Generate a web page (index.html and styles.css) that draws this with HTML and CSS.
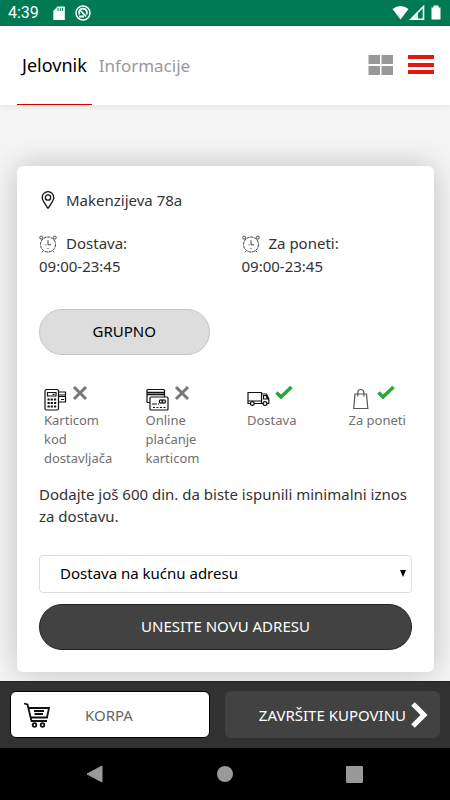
FILE: index.html
```html
<!DOCTYPE html>
<html lang="sr-Latn">
<head>
<meta charset="utf-8">
<meta name="viewport" content="width=device-width, initial-scale=1">
<title>Jelovnik</title>
<link rel="stylesheet" href="styles.css">
</head>
<body>
<svg class="defs" width="0" height="0" aria-hidden="true">
  <symbol id="clock" viewBox="0 0 18 18">
    <g fill="none" stroke="#444">
      <circle cx="9" cy="9.500" r="7.500" stroke-width="1" stroke-dasharray="3.200 .600"/>
      <circle cx="2.200" cy="2.600" r="1.500"/><circle cx="15.800" cy="2.600" r="1.500"/>
      <path d="M9 5.200V9.800H12M4 16l-1 1.300M14 16l1 1.300M6.500 9.800h1M9 13v1"/>
    </g>
  </symbol>
  <symbol id="cross" viewBox="0 0 16 16"><path d="M2 2l12 12M14 2L2 14" stroke="#777" stroke-width="3" fill="none"/></symbol>
  <symbol id="check" viewBox="0 0 18 16"><path d="M1.500 7.500l4.500 4.500L16.500 2" stroke="#2aa63a" stroke-width="3.600" fill="none"/></symbol>
</svg>

<div class="status">
  <span class="time">4:39</span>
  <svg width="12" height="15" viewBox="0 0 12 15"><path d="M4.500 .5H11q.8 0 .8 .8V14H.3V5z" fill="#fff"/><path d="M5 2v3M7.300 2v3M9.500 2v3" stroke="#007a53"/></svg>
  <svg width="16" height="16" viewBox="0 0 16 16" fill="none" stroke="#fff"><circle cx="8" cy="8" r="7" stroke-width="1.500"/><path d="M4.500 9.500A4 4 0 1 1 11.500 9.500M5.500 5.500l5.500 6M4 11.500h5" stroke-width="1.800"/></svg>
  <svg class="signals" width="50" height="16" viewBox="0 0 50 16"><path d="M.5 4Q8.500-2 16.500 4L8.500 14.500z" fill="#fff"/><path d="M31.500 1.500V14.200H19z" fill="none" stroke="#fff" stroke-width="1.600"/><path d="M31.500 1.500L19 14.200H26V7z" fill="#fff" opacity=".85"/><path d="M39.500 2.500h2V.5h5v2h2V14.500h-9z" fill="#fff"/></svg>
</div>

<header class="header">
  <nav class="tabs">
    <a class="tab active" href="#jelovnik" aria-current="page">Jelovnik</a>
    <a class="tab" href="#informacije">Informacije</a>
  </nav>
  <div class="views">
    <button class="view" type="button" aria-label="Mreža"><svg width="26" height="22" viewBox="0 0 26 22"><path d="M.5 1h11.500v9H.5zM13.500 1H25v9H13.500zM.5 12h11.500v9H.5zM13.500 12H25v9H13.500z" fill="#999"/></svg></button>
    <button class="view" type="button" aria-label="Lista"><svg width="26" height="22" viewBox="0 0 26 22"><path d="M0 1h26v4H0zM0 9h26v4H0zM0 16h26v4H0z" fill="#e2180f"/></svg></button>
  </div>
</header>

<main class="main">
  <section class="card">
    <p class="line address">
      <svg width="18" height="18" viewBox="0 0 18 18" fill="none" stroke="#111" stroke-width="1.300"><path d="M9 17.300C7 13.800 3.200 10 3.200 6.500a5.800 5.800 0 0 1 11.600 0C14.800 10 11 13.800 9 17.300z"/><circle cx="9" cy="6.500" r="2.700"/></svg>
      Makenzijeva 78a
    </p>
    <div class="halves hours">
      <div><p class="line"><svg width="18" height="18"><use href="#clock"/></svg>Dostava:</p><p>09:00-23:45</p></div>
      <div><p class="line"><svg width="18" height="18"><use href="#clock"/></svg>Za poneti:</p><p>09:00-23:45</p></div>
    </div>
    <div class="halves"><button class="pill light" type="button">GRUPNO</button></div>
    <ul class="perks">
      <li>
        <div class="icons">
          <svg width="23" height="23" viewBox="0 0 23 23" fill="none" stroke="#111" stroke-width="1.200"><path d="M15 4h6.500v10H15M15 7h6.500M15 8.500h6.500M17 11.500h3"/><rect x="1" y="1.500" width="13.500" height="20.500" rx="1.500" fill="#fff"/><path d="M3.500 4.500h8.500v3.500H3.500zM8.500 6.300h2"/><path d="M3.500 11.500h2.200M6.700 11.500h2.200M10 11.500h2.200M3.500 15h2.200M6.700 15h2.200M10 15h2.200M3.500 18.500h2.200M6.700 18.500h2.200M10 18.500h2.200" stroke-width="2.200"/></svg>
          <svg class="mark" width="16" height="16"><use href="#cross"/></svg>
        </div>
        Karticom kod dostavljača
      </li>
      <li>
        <div class="icons">
          <svg width="23" height="23" viewBox="0 0 23 23" fill="none" stroke="#111" stroke-width="1.200"><rect x="1" y="1.500" width="17.500" height="13" rx="1"/><path d="M1 4.500h17.500M1 6.500h17.500" stroke-width="1.600"/><rect x="4" y="9" width="18" height="13" rx="1" fill="#fff"/><circle cx="15" cy="13.500" r="1.700"/><circle cx="17.800" cy="13.500" r="1.700"/><path d="M6 16h5M12 16h1M7 19.500h2M10.500 19.500h2M14 19.500h2M17.500 19.500h2"/></svg>
          <svg class="mark" width="16" height="16"><use href="#cross"/></svg>
        </div>
        Online plaćanje karticom
      </li>
      <li>
        <div class="icons">
          <svg width="23" height="23" viewBox="0 0 23 23" fill="none" stroke="#111" stroke-width="1.200"><path d="M3.400 15.500H1V4.500h13.500v11H7.200M1 13h13.500M14.500 6h5l2.300 5v4.500h-2M16 15.500h-1.500M16.500 7.500h2.500l1.500 3.500h-4z"/><circle cx="5.300" cy="15.500" r="1.900"/><circle cx="18" cy="15.500" r="1.900"/></svg>
          <svg class="mark" width="18" height="16"><use href="#check"/></svg>
        </div>
        Dostava
      </li>
      <li>
        <div class="icons">
          <svg width="23" height="23" viewBox="0 0 23 23" fill="none" stroke="#555" stroke-width="1.200"><path d="M6 6h11.500l1.300 14.500H4.700zM8.800 8.500V4.500q0-3 3-3t3 3V8.500"/></svg>
          <svg class="mark" width="18" height="16"><use href="#check"/></svg>
        </div>
        <span class="nowrap">Za poneti</span>
      </li>
    </ul>
    <p class="note">Dodajte još 600 din. da biste ispunili minimalni iznos za dostavu.</p>
    <div class="field">
      <select class="select" aria-label="Način dostave"><option>Dostava na kućnu adresu</option></select>
      <svg class="caret" width="6" height="7" viewBox="0 0 6 7" aria-hidden="true"><path d="M0 0h6L3 7z" fill="#000"/></svg>
    </div>
    <button class="pill dark" type="button">UNESITE NOVU ADRESU</button>
  </section>
</main>

<footer class="footer">
  <button class="cart" type="button">
    <svg width="28" height="26" viewBox="0 0 28 26" fill="none" stroke="#111" stroke-width="1.800"><path d="M1 1.500l3.500 1L8.500 19H24M5.500 6H26L24 15.500H7.500M11 9h10M11.500 12h8.500"/><circle cx="11.500" cy="23" r="1.800"/><circle cx="19.500" cy="23" r="1.800"/></svg>
    <span>KORPA</span>
  </button>
  <button class="checkout" type="button">
    <span>ZAVRŠITE KUPOVINU</span>
    <svg width="18" height="28" viewBox="0 0 18 28"><path d="M3 3l11 11L3 25" fill="none" stroke="#fff" stroke-width="5"/></svg>
  </button>
</footer>

<div class="system">
  <svg width="18" height="18" viewBox="0 0 18 18"><path d="M1 9L16 1V17z" fill="#999" stroke="#999" stroke-linejoin="round"/></svg>
  <svg width="18" height="18" viewBox="0 0 18 18"><circle cx="9" cy="9" r="8" fill="#999"/></svg>
  <svg width="18" height="18" viewBox="0 0 18 18"><rect x="0" y="1" width="17" height="17" rx="1" fill="#999"/></svg>
</div>
</body>
</html>
```
FILE: styles.css
```css
* { box-sizing: border-box; }
body {
  margin: 0;
  min-height: 100vh;
  display: flex;
  flex-direction: column;
  background: #f5f5f5;
  color: #333;
  font: 15px/23px "Noto Sans", "Open Sans", sans-serif;
}
p, ul { margin: 0; padding: 0; }
button, select { font: inherit; line-height: 22px; cursor: pointer; }
svg { flex: none; display: block; }
.defs { position: absolute; }

.status {
  display: flex;
  align-items: center;
  gap: 10px;
  height: 26px;
  padding: 0 8px;
  background: #007a53;
  color: #fff;
}
.time { font: 16px/26px Roboto, sans-serif; margin-right: 4px; }
.signals { margin-left: auto; }

.header {
  display: flex;
  justify-content: space-between;
  align-items: stretch;
  height: 79px;
  padding: 0 16px 0 17px;
  background: #fff;
  box-shadow: 0 1px 6px rgba(0, 0, 0, .08);
}
.tabs { display: flex; gap: 2px; }
.tab {
  display: flex;
  align-items: center;
  padding: 0 5px;
  border-bottom: 1px solid transparent;
  color: #999;
  font-size: 17px;
  text-decoration: none;
}
.tab.active { border-color: #d60000; color: #000; font-size: 18px; }
.views { display: flex; align-items: center; gap: 14px; padding-bottom: 1px; }
.view { padding: 0; border: 0; background: none; }

.main { flex: 1; padding: 61px 16px 9px 17px; }
.card {
  padding: 22px;
  border-radius: 6px;
  background: #fff;
  box-shadow: 0 0 30px rgba(0, 0, 0, .22);
}
.line { display: flex; align-items: center; gap: 9px; }
.address { height: 24px; }
.halves { display: grid; grid-template-columns: 1fr 1fr; column-gap: 32px; }
.hours { margin: 20px 0 31px; }
.pill {
  display: block;
  width: 100%;
  height: 46px;
  padding: 0 0 2px;
  border-radius: 23px;
}
.light { border: 1px solid #c4c4c4; background: #ddd; color: #000; }
.dark { border: 1px solid #222; background: #424242; color: #fff; }

.perks {
  display: grid;
  grid-template-columns: repeat(4, minmax(0, 1fr));
  column-gap: 38px;
  margin: 30px 0 15px;
  padding-left: 5px;
  list-style: none;
  color: #707070;
  font-size: 13px;
  line-height: 19px;
}
.icons { display: flex; gap: 5px; height: 26px; }
.icons svg:first-child { margin-top: 3px; }
.nowrap { white-space: nowrap; }
.note { line-height: 22px; }

.field { position: relative; margin: 28px 0 11px; }
.select {
  display: block;
  width: 100%;
  height: 38px;
  padding: 0 20px 2px;
  appearance: none;
  border: 1px solid #ddd;
  border-radius: 4px;
  background: #fff;
  color: #000;
}
.caret { position: absolute; right: 6px; top: 15px; pointer-events: none; }

.footer {
  display: grid;
  grid-template-columns: 200fr 215fr;
  gap: 15px;
  height: 67px;
  padding: 9px 10px 10px;
  border-top: 1px solid #222;
  background: #313131;
}
.cart, .checkout { display: flex; align-items: center; border-radius: 6px; }
.cart { gap: 34px; padding: 0 12px; border: 1px solid #000; background: #fff; color: #666; }
.checkout { justify-content: flex-end; gap: 4px; padding: 0 12px; border: 0; background: #424242; color: #fff; }

.system {
  display: flex;
  justify-content: space-between;
  align-items: center;
  height: 52px;
  padding: 0 86px 1px;
  background: #000;
}
```
